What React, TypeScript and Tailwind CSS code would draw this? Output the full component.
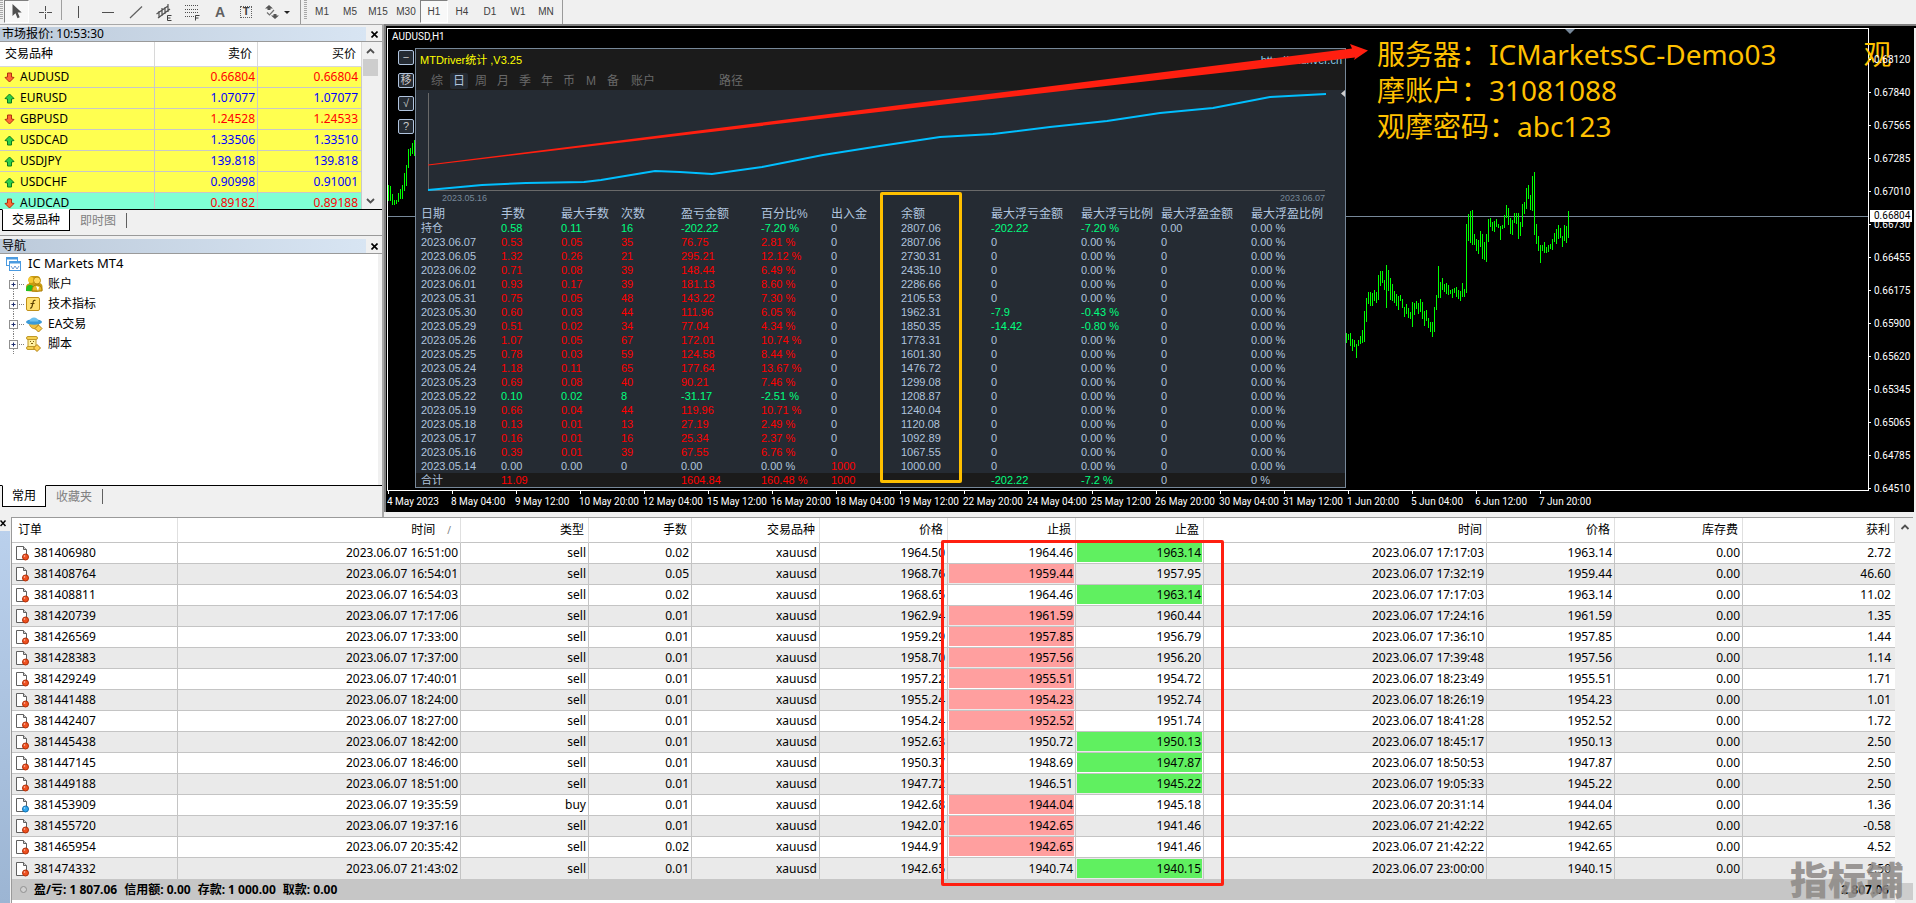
import React, { useState } from 'react';

interface Quote {
  symbol: string;
  bid: string;
  ask: string;
  up: boolean;
  cross?: boolean;
}

interface Order {
  id: string;
  openTime: string;
  type: 'sell' | 'buy';
  lots: string;
  open: string;
  sl: string;
  tp: string;
  closeTime: string;
  close: string;
  profit: string;
}

const PERIODS = ['M1', 'M5', 'M15', 'M30', 'H1', 'H4', 'D1', 'W1', 'MN'];

const QUOTES: Quote[] = [
  { symbol: 'AUDUSD', bid: '0.66804', ask: '0.66804', up: false },
  { symbol: 'EURUSD', bid: '1.07077', ask: '1.07077', up: true },
  { symbol: 'GBPUSD', bid: '1.24528', ask: '1.24533', up: false },
  { symbol: 'USDCAD', bid: '1.33506', ask: '1.33510', up: true },
  { symbol: 'USDJPY', bid: '139.818', ask: '139.818', up: true },
  { symbol: 'USDCHF', bid: '0.90998', ask: '0.91001', up: true },
  { symbol: 'AUDCAD', bid: '0.89182', ask: '0.89188', up: false, cross: true },
];

const STAT_HEAD = ['日期', '手数', '最大手数', '次数', '盈亏金额', '百分比%', '出入金', '余额', '最大浮亏金额', '最大浮亏比例', '最大浮盈金额', '最大浮盈比例'];

const STATS: string[][] = [
  ['持仓', '0.58', '0.11', '16', '-202.22', '-7.20 %', '0', '2807.06', '-202.22', '-7.20 %', '0.00', '0.00 %'],
  ['2023.06.07', '0.53', '0.05', '35', '76.75', '2.81 %', '0', '2807.06', '0', '0.00 %', '0', '0.00 %'],
  ['2023.06.05', '1.32', '0.26', '21', '295.21', '12.12 %', '0', '2730.31', '0', '0.00 %', '0', '0.00 %'],
  ['2023.06.02', '0.71', '0.08', '39', '148.44', '6.49 %', '0', '2435.10', '0', '0.00 %', '0', '0.00 %'],
  ['2023.06.01', '0.93', '0.17', '39', '181.13', '8.60 %', '0', '2286.66', '0', '0.00 %', '0', '0.00 %'],
  ['2023.05.31', '0.75', '0.05', '48', '143.22', '7.30 %', '0', '2105.53', '0', '0.00 %', '0', '0.00 %'],
  ['2023.05.30', '0.60', '0.03', '44', '111.96', '6.05 %', '0', '1962.31', '-7.9', '-0.43 %', '0', '0.00 %'],
  ['2023.05.29', '0.51', '0.02', '34', '77.04', '4.34 %', '0', '1850.35', '-14.42', '-0.80 %', '0', '0.00 %'],
  ['2023.05.26', '1.07', '0.05', '67', '172.01', '10.74 %', '0', '1773.31', '0', '0.00 %', '0', '0.00 %'],
  ['2023.05.25', '0.78', '0.03', '59', '124.58', '8.44 %', '0', '1601.30', '0', '0.00 %', '0', '0.00 %'],
  ['2023.05.24', '1.18', '0.11', '65', '177.64', '13.67 %', '0', '1476.72', '0', '0.00 %', '0', '0.00 %'],
  ['2023.05.23', '0.69', '0.08', '40', '90.21', '7.46 %', '0', '1299.08', '0', '0.00 %', '0', '0.00 %'],
  ['2023.05.22', '0.10', '0.02', '8', '-31.17', '-2.51 %', '0', '1208.87', '0', '0.00 %', '0', '0.00 %'],
  ['2023.05.19', '0.66', '0.04', '44', '119.96', '10.71 %', '0', '1240.04', '0', '0.00 %', '0', '0.00 %'],
  ['2023.05.18', '0.13', '0.01', '13', '27.19', '2.49 %', '0', '1120.08', '0', '0.00 %', '0', '0.00 %'],
  ['2023.05.17', '0.16', '0.01', '16', '25.34', '2.37 %', '0', '1092.89', '0', '0.00 %', '0', '0.00 %'],
  ['2023.05.16', '0.39', '0.01', '39', '67.55', '6.76 %', '0', '1067.55', '0', '0.00 %', '0', '0.00 %'],
  ['2023.05.14', '0.00', '0.00', '0', '0.00', '0.00 %', '1000', '1000.00', '0', '0.00 %', '0', '0.00 %'],
  ['合计', '11.09', '', '', '1604.84', '160.48 %', '1000', '', '-202.22', '-7.2 %', '0', '0 %'],
];

const TIMES = [
  '4 May 2023', '8 May 04:00', '9 May 12:00', '10 May 20:00', '12 May 04:00', '15 May 12:00', '16 May 20:00',
  '18 May 04:00', '19 May 12:00', '22 May 20:00', '24 May 04:00', '25 May 12:00', '26 May 20:00', '30 May 04:00',
  '31 May 12:00', '1 Jun 20:00', '5 Jun 04:00', '6 Jun 12:00', '7 Jun 20:00',
];

const PRICES = ['0.68120', '0.67840', '0.67565', '0.67285', '0.67010', '0.66730', '0.66455', '0.66175', '0.65900', '0.65620', '0.65345', '0.65065', '0.64785', '0.64510'];

// [top, bottom] of every bar, two pixels apart
const BARS_LEFT = [
  [185, 201], [186, 201], [194, 205], [200, 205], [200, 204], [193, 202], [189, 199],
  [185, 199], [173, 191], [165, 186], [149, 168], [148, 156], [143, 154], [140, 156],
];

const BARS_RIGHT = [
  [333, 343], [334, 340], [333, 346], [339, 351], [340, 347], [344, 358], [340, 346], [336, 344], [330, 343], [311, 342],
  [298, 322], [292, 304], [292, 306], [293, 306], [290, 301], [292, 303], [275, 300], [271, 286], [271, 283], [280, 290],
  [265, 308], [270, 291], [278, 300], [284, 301], [291, 303], [294, 306], [296, 310], [295, 301], [299, 308], [307, 317],
  [304, 314], [308, 318], [312, 319], [302, 327], [303, 315], [301, 309], [303, 314], [299, 312], [302, 319], [311, 326],
  [310, 321], [318, 328], [322, 332], [322, 337], [307, 332], [295, 310], [266, 298], [282, 298], [278, 290], [284, 292],
  [283, 294], [285, 295], [290, 294], [289, 298], [288, 293], [287, 297], [290, 299], [291, 301], [283, 297], [289, 297],
  [224, 293], [214, 241], [211, 243], [210, 245], [234, 245], [239, 251], [240, 254], [231, 247], [234, 259], [242, 260],
  [234, 262], [219, 242], [218, 227], [222, 231], [221, 232], [219, 227], [224, 228], [226, 240], [225, 229], [215, 228],
  [205, 218], [208, 225], [218, 234], [220, 235], [213, 223], [213, 224], [213, 239], [222, 236], [204, 227], [202, 214],
  [188, 209], [185, 199], [195, 210], [176, 211], [172, 235], [224, 244], [236, 251], [245, 263], [245, 251], [242, 253],
  [247, 253], [245, 252], [244, 249], [239, 250], [233, 242], [229, 244], [225, 239], [228, 238], [236, 247], [225, 241],
  [226, 243], [211, 238],
];

const ORDERS: Order[] = [
  { id: '381406980', openTime: '16:51:00', type: 'sell', lots: '0.02', open: '1964.50', sl: '1964.46', tp: '1963.14', closeTime: '17:17:03', close: '1963.14', profit: '2.72' },
  { id: '381408764', openTime: '16:54:01', type: 'sell', lots: '0.05', open: '1968.76', sl: '1959.44', tp: '1957.95', closeTime: '17:32:19', close: '1959.44', profit: '46.60' },
  { id: '381408811', openTime: '16:54:03', type: 'sell', lots: '0.02', open: '1968.65', sl: '1964.46', tp: '1963.14', closeTime: '17:17:03', close: '1963.14', profit: '11.02' },
  { id: '381420739', openTime: '17:17:06', type: 'sell', lots: '0.01', open: '1962.94', sl: '1961.59', tp: '1960.44', closeTime: '17:24:16', close: '1961.59', profit: '1.35' },
  { id: '381426569', openTime: '17:33:00', type: 'sell', lots: '0.01', open: '1959.29', sl: '1957.85', tp: '1956.79', closeTime: '17:36:10', close: '1957.85', profit: '1.44' },
  { id: '381428383', openTime: '17:37:00', type: 'sell', lots: '0.01', open: '1958.70', sl: '1957.56', tp: '1956.20', closeTime: '17:39:48', close: '1957.56', profit: '1.14' },
  { id: '381429249', openTime: '17:40:01', type: 'sell', lots: '0.01', open: '1957.22', sl: '1955.51', tp: '1954.72', closeTime: '18:23:49', close: '1955.51', profit: '1.71' },
  { id: '381441488', openTime: '18:24:00', type: 'sell', lots: '0.01', open: '1955.24', sl: '1954.23', tp: '1952.74', closeTime: '18:26:19', close: '1954.23', profit: '1.01' },
  { id: '381442407', openTime: '18:27:00', type: 'sell', lots: '0.01', open: '1954.24', sl: '1952.52', tp: '1951.74', closeTime: '18:41:28', close: '1952.52', profit: '1.72' },
  { id: '381445438', openTime: '18:42:00', type: 'sell', lots: '0.01', open: '1952.63', sl: '1950.72', tp: '1950.13', closeTime: '18:45:17', close: '1950.13', profit: '2.50' },
  { id: '381447145', openTime: '18:46:00', type: 'sell', lots: '0.01', open: '1950.37', sl: '1948.69', tp: '1947.87', closeTime: '18:50:53', close: '1947.87', profit: '2.50' },
  { id: '381449188', openTime: '18:51:00', type: 'sell', lots: '0.01', open: '1947.72', sl: '1946.51', tp: '1945.22', closeTime: '19:05:33', close: '1945.22', profit: '2.50' },
  { id: '381453909', openTime: '19:35:59', type: 'buy', lots: '0.01', open: '1942.68', sl: '1944.04', tp: '1945.18', closeTime: '20:31:14', close: '1944.04', profit: '1.36' },
  { id: '381455720', openTime: '19:37:16', type: 'sell', lots: '0.01', open: '1942.07', sl: '1942.65', tp: '1941.46', closeTime: '21:42:22', close: '1942.65', profit: '-0.58' },
  { id: '381465954', openTime: '20:35:42', type: 'sell', lots: '0.02', open: '1944.91', sl: '1942.65', tp: '1941.46', closeTime: '21:42:22', close: '1942.65', profit: '4.52' },
  { id: '381474332', openTime: '21:43:02', type: 'sell', lots: '0.01', open: '1942.65', sl: '1940.74', tp: '1940.15', closeTime: '23:00:00', close: '1940.15', profit: '2.50' },
];

const ToolButton: React.FC<{ label: string; className: string; active?: boolean; children: React.ReactNode }> = ({ label, className, active, children }) => (
  <button
    aria-label={label}
    className={`flex h-[23px] items-center justify-center ${className} ${active ? 'border border-t-[#808080] border-l-[#808080] border-r-white border-b-white bg-[#f8f8f8]' : ''}`}
  >
    {children}
  </button>
);

const Grip = () => (
  <svg width="4" height="20" viewBox="0 0 4 20" className="shrink-0">
    {[0, 2, 4, 6, 8, 10, 12, 14, 16, 18].map(y => <path key={y} d={`M0 ${y + 0.5}h3`} stroke="#a8a8a8" />)}
  </svg>
);

const Toolbar = () => {
  const [period, setPeriod] = useState('H1');
  return (
    <header className="flex h-6 items-start bg-[#f0f0f0] font-['Liberation_Sans',sans-serif] text-[10px] text-[#404040]">
      <div className="flex h-6 w-[301px] items-start border-r border-[#9a9a9a]">
        <Grip />
        <ToolButton label="Cursor" className="w-[25px]" active>
          <svg width="10" height="15" viewBox="0 0 10 15"><path d="M0.500 0v12l3-2.800 2 5 2.200-1-2-4.800h4z" fill="#505050" /></svg>
        </ToolButton>
        <ToolButton label="Crosshair" className="w-8">
          <svg width="16" height="16" viewBox="0 0 16 16"><path d="M8.500 2v5M8.500 10v5M2 8.500h5M10 8.500h5M8 8.500h1" stroke="#505050" fill="none" /></svg>
        </ToolButton>
        <span className="h-5 w-px bg-[#a0a0a0]" />
        <ToolButton label="Vertical line" className="w-8">
          <svg width="16" height="16" viewBox="0 0 16 16"><path d="M8.500 2v12" stroke="#505050" /></svg>
        </ToolButton>
        <ToolButton label="Horizontal line" className="w-7">
          <svg width="16" height="16" viewBox="0 0 16 16"><path d="M2 8.500h12" stroke="#505050" /></svg>
        </ToolButton>
        <ToolButton label="Trend line" className="w-7">
          <svg width="16" height="16" viewBox="0 0 16 16"><path d="M2 14L14 2.500" stroke="#606060" strokeWidth="1.200" /></svg>
        </ToolButton>
        <ToolButton label="Equidistant channel" className="w-7">
          <svg width="16" height="18" viewBox="0 0 16 18">
            <path d="M0.500 11L12 3M2 15L14 6M3 8v7M6 5v8M9 4v7M12 1v8" stroke="#505050" strokeWidth="1.200" fill="none" />
            <path d="M15.500 12.500h-4v5h4M11.500 15h3" stroke="#404040" fill="none" />
          </svg>
        </ToolButton>
        <ToolButton label="Fibonacci" className="w-7">
          <svg width="16" height="18" viewBox="0 0 16 18">
            <path d="M1 2.500h13M1 6.500h13M1 9.500h13M1 13.500h9" stroke="#505050" strokeDasharray="1 1" fill="none" />
            <path d="M15.500 12.500h-4v5M11.500 15h3" stroke="#404040" fill="none" />
          </svg>
        </ToolButton>
        <ToolButton label="Text" className="w-7 text-sm font-bold text-[#606060]">A</ToolButton>
        <ToolButton label="Text label" className="w-6">
          <span className="flex h-3 w-3 items-center justify-center border border-dotted border-[#606060] text-[11px] leading-none font-bold">T</span>
        </ToolButton>
        <ToolButton label="Arrows" className="ml-1 w-8">
          <svg width="26" height="16" viewBox="0 0 26 16">
            <path d="M4 1l4 3.500H5.500V6h-3V4.500H0zM10 15L6 11.500h2.500V10h3v1.500H14z" fill="#555" />
            <path d="M2 8.500l2.500 2.500 4.500-5" stroke="#707070" strokeWidth="1.200" fill="none" />
            <path d="M19 7h6l-3 3z" fill="#222" />
          </svg>
        </ToolButton>
      </div>
      <div className="flex h-6 w-[262px] items-start border-r border-[#9a9a9a] pl-[3px]">
        <Grip />
        {PERIODS.map(p => (
          <button
            key={p}
            onClick={() => setPeriod(p)}
            className={`h-[23px] w-7 border leading-[22px] ${p === period ? 'border-t-[#808080] border-l-[#808080] border-r-white border-b-white bg-[#f8f8f8]' : 'border-transparent'}`}
          >
            {p}
          </button>
        ))}
      </div>
    </header>
  );
};

const PaneTitle: React.FC<{ title: string }> = ({ title }) => (
  <div className="flex h-[15px] items-center border-b border-[#9a9a9a] bg-[#f0f0f0]">
    <h2 className="h-[14px] flex-1 bg-linear-to-r from-[#bccada] to-[#d8e5f3] pl-[2px] text-xs leading-[14px]">{title}</h2>
    <button aria-label={`Close ${title}`} className="flex h-[14px] w-4 items-center justify-center">
      <svg width="7" height="7" viewBox="0 0 7 7"><path d="M0.500 0.500l6 6M6.500 0.500l-6 6" stroke="#000" strokeWidth="1.600" /></svg>
    </button>
  </div>
);

const PaneTabs: React.FC<{ tabs: string[]; wide?: boolean }> = ({ tabs, wide }) => (
  <div className="flex h-[22px] border-t border-black bg-[#f0f0f0] pl-[2px] text-xs">
    <button className={`-mt-px border border-t-white border-black bg-white ${wide ? 'w-[68px]' : 'w-[44px]'}`}>{tabs[0]}</button>
    <button className="my-[3px] border-r border-[#606060] px-[10px] leading-4 text-[#808080]">{tabs[1]}</button>
  </div>
);

const QuoteArrow: React.FC<{ up: boolean }> = ({ up }) => (
  <svg width="11" height="11" viewBox="0 0 11 11" className="shrink-0">
    {up
      ? <path d="M5.500 1L10 5.500 7.500 6v4h-4V6L1 5.500z" fill="#2fd04a" stroke="#0a7a20" />
      : <path d="M5.500 10L1 5.500 3.500 5V1h4v4l2.500.500z" fill="#ff6a35" stroke="#b03010" />}
  </svg>
);

const MarketWatch = () => (
  <section className="border-b border-[#9a9a9a] pt-[2px] pb-1">
    <PaneTitle title="市场报价: 10:53:30" />
    <div className="flex h-[167px] bg-[#f0f0f0] pr-1">
      <div className="flex-1 overflow-hidden">
        <table className="w-full table-fixed border-separate border-spacing-0 text-xs">
          <colgroup><col className="w-[155px]" /><col className="w-[103px]" /><col /></colgroup>
          <thead>
            <tr className="h-[25px] bg-white">
              {['交易品种', '卖价', '买价'].map((h, i) => (
                <th key={h} className={`border-r border-b border-[#d8d8d8] px-[5px] py-0 font-normal ${i === 0 ? 'text-left' : 'text-right'}`}>{h}</th>
              ))}
            </tr>
          </thead>
          <tbody>
            {QUOTES.map(q => (
              <tr key={q.symbol} className={`h-[21px] ${q.cross ? 'bg-[#7fffd4]' : 'bg-[#ffff50]'} ${q.up ? 'text-[#0000ff]' : 'text-[#ff0000]'}`}>
                <td className="border-r border-b border-[#c8c8c8] p-0 pl-1 text-black">
                  <span className="flex h-5 items-center gap-[5px]"><QuoteArrow up={q.up} />{q.symbol}</span>
                </td>
                <td className="border-r border-b border-[#c8c8c8] p-0 pr-[2px] text-right">{q.bid}</td>
                <td className="border-r border-b border-[#c8c8c8] p-0 pr-[3px] text-right">{q.ask}</td>
              </tr>
            ))}
          </tbody>
        </table>
      </div>
      <div className="flex w-4 flex-col items-center justify-between">
        <div className="flex w-full flex-col items-center">
          <svg width="9" height="17" viewBox="0 0 9 17"><path d="M1 11l3.500-3.500L8 11" stroke="#505050" strokeWidth="1.800" fill="none" /></svg>
          <div className="h-[17px] w-[15px] bg-[#cdcdcd]" />
        </div>
        <svg width="9" height="17" viewBox="0 0 9 17"><path d="M1 7l3.500 3.500L8 7" stroke="#505050" strokeWidth="1.800" fill="none" /></svg>
      </div>
    </div>
    <PaneTabs tabs={['交易品种', '即时图']} wide />
  </section>
);

const TREE = [
  {
    label: '账户',
    icon: (
      <>
        <path d="M1 16v-4c0-2 1-3 3-3.500V4c0-2 1-3 3-3h5c2 0 3 1 3 3v4c2 1 2.500 2 2.500 4v3.500L12 17z" fill="#c89a10" />
        <circle cx="6" cy="5" r="3" fill="#f7c830" /><circle cx="12" cy="5.500" r="3.500" fill="#ffd85a" stroke="#b88a10" />
        <path d="M1 16c0-4 1-6 4-6s4 2 4 6z" fill="#20c020" /><path d="M7 16c0-4 2-6 5-6s5 2 5 6z" fill="#e8b820" stroke="#a87a08" /><path d="M11 11l2 5 1-4z" fill="#fff" />
      </>
    ),
  },
  {
    label: '技术指标',
    icon: (
      <>
        <rect x="1.500" y="2.500" width="13" height="13" rx="1.500" fill="#ffe070" stroke="#c09018" />
        <path d="M10.500 5.500c-2-.6-2.200.6-2.500 2l-1 4c-.3 1.200-.8 1.800-2 1.500M5.500 8.500h4" stroke="#5a4000" strokeWidth="1.200" fill="none" />
      </>
    ),
  },
  {
    label: 'EA交易',
    icon: (
      <>
        <path d="M4 8c1 5 4 6 8 6l2-6z" fill="#f0c040" stroke="#b08010" strokeWidth=".7" />
        <ellipse cx="9" cy="7" rx="8" ry="2.800" fill="#3a9ad8" /><path d="M4.500 6.500C5 1 13 1 13.500 6.500z" fill="#6cc0ee" />
        <path d="M13.500 10l3.500 3.500-3.500 3.500-3.500-3.500z" fill="#ffd050" stroke="#b08010" />
      </>
    ),
  },
  {
    label: '脚本',
    icon: (
      <>
        <path d="M3 4h8v9H3z" fill="#fff0a0" stroke="#c09828" />
        <rect x="1.500" y="1.500" width="11" height="3" rx="1.500" fill="#f5d050" stroke="#c09828" /><rect x="1.500" y="11.500" width="9" height="3" rx="1.500" fill="#f5d050" stroke="#c09828" />
        <path d="M5 6.500h1M8 6.500h1M6 8.500h2" stroke="#806010" />
        <path d="M12 9.500l3.500 3.500-3.500 3.500L8.500 13z" fill="#ffd050" stroke="#b08010" />
      </>
    ),
  },
];

const Navigator = () => (
  <section className="flex flex-1 flex-col pt-[3px] pb-[10px]">
    <PaneTitle title="导航" />
    <div className="mr-1 flex-1 bg-white text-xs">
      <div className="flex h-5 items-center gap-[7px] pl-[6px] text-[13px]">
        <svg width="15" height="14" viewBox="0 0 15 14">
          <rect x=".5" y=".5" width="11" height="8" fill="#fff" stroke="#4a9ae0" /><path d="M0 1.500h12" stroke="#4a9ae0" strokeWidth="2" />
          <rect x="3.500" y="4.500" width="11" height="9" fill="#fff" stroke="#4a9ae0" /><path d="M3 5.500h12" stroke="#4a9ae0" strokeWidth="2" />
          <path d="M5 9l2 3 2-3 2 3 2-3" stroke="#4a80c8" strokeWidth=".8" fill="none" />
        </svg>
        IC Markets MT4
      </div>
      <ul>
        {TREE.map(n => (
          <li key={n.label} className="flex h-5 items-center pl-[9px]">
            <svg width="16" height="20" viewBox="0 0 16 20">
              <path d="M4.500 0v6M4.500 15v5M10 10.500h6" stroke="#808080" strokeDasharray="1 1" fill="none" />
              <rect x=".5" y="6.500" width="8" height="8" fill="#fff" stroke="#909090" /><path d="M2.500 10.500h4M4.500 8.500v4" stroke="#203070" />
            </svg>
            <svg width="18" height="18" viewBox="0 0 18 18" className="mr-[5px]">{n.icon}</svg>
            {n.label}
          </li>
        ))}
      </ul>
    </div>
    <PaneTabs tabs={['常用', '收藏夹']} />
  </section>
);

const statColor = (row: string[], col: number) => {
  const v = row[col];
  if (col >= 8) return v.startsWith('-') ? 'text-[#00ff7f]' : '';
  if (col === 6) return v === '1000' ? 'text-[#ff0000]' : '';
  if (col === 0 || col === 7 || row[4] === '0.00') return '';
  return row[4].startsWith('-') ? 'text-[#00ff7f]' : 'text-[#ff0000]';
};

const StatsPanel = () => (
  <section className="absolute top-[19px] left-[27px] w-[931px] border border-[#778899] bg-[#252b33] font-['Liberation_Sans','Noto_Sans_CJK_SC',sans-serif] text-[#b0c4de]">
    <div className="h-[41px] bg-[#1b1b1b]">
      <div className="flex h-6 items-start justify-between pr-[3px] pl-1 text-[11px] leading-[22px]">
        <h3 className="text-[#ffff00]">MTDriver统计 ,V3.25</h3>
        <a href="#mtdriver" className="text-[#87ceeb]">http://mtdriver.cn</a>
      </div>
      <nav className="flex h-4 items-center pl-3 text-xs leading-4 text-[#696969]">
        {['综', '日', '周', '月', '季', '年', '币', 'M', '备'].map(t => (
          <button key={t} className={`mr-1 h-4 w-[18px] rounded-xs ${t === '日' ? 'bg-[#252b33] text-[#b0c4de]' : ''}`}>{t}</button>
        ))}
        <button className="ml-[5px]">账户</button>
        <button className="ml-16">路径</button>
      </nav>
    </div>
    <svg viewBox="416 90 929 101" className="block w-full">
      <path d="M428.500 93v97.500H1325" stroke="#696969" fill="none" />
      <polyline
        points="428,190 482,185 526,183 584,182 601,180 655,171 680,172 712,174 762,167 823,155 880,146 940,137 993,134 1050,127 1107,121 1160,113 1213,108 1270,97 1326,94"
        fill="none" stroke="#00bfff" strokeWidth="2"
      />
      <path d="M1345 90v7l-4-3.500z" fill="#d0d0d0" />
    </svg>
    <div className="flex h-4 justify-between pr-[20px] pl-[26px] text-[9px] leading-[14px] text-[#778899]">
      <span>2023.05.16</span>
      <span>2023.06.07</span>
    </div>
    <table className="w-full table-fixed border-collapse text-[11px] leading-[14px]">
      <colgroup>
        <col className="w-[85px]" /><col className="w-[60px]" /><col className="w-[60px]" /><col className="w-[60px]" />
        <col className="w-[80px]" /><col className="w-[70px]" /><col className="w-[70px]" /><col className="w-[90px]" />
        <col className="w-[90px]" /><col className="w-[80px]" /><col className="w-[90px]" /><col />
      </colgroup>
      <thead>
        <tr>
          {STAT_HEAD.map((h, i) => (
            <th key={h} className={`h-[14px] p-0 text-left text-xs leading-[14px] font-normal whitespace-nowrap ${i === 0 ? 'pl-[5px]' : ''}`}>{h}</th>
          ))}
        </tr>
      </thead>
      <tbody>
        {STATS.map(row => (
          <tr key={row[0]} className={row[0] === '合计' ? 'bg-[#1b1b1b]' : ''}>
            {row.map((v, i) => (
              <td key={i} className={`h-[14px] p-0 whitespace-nowrap ${i === 0 ? 'pl-[5px]' : ''} ${statColor(row, i)}`}>{v}</td>
            ))}
          </tr>
        ))}
      </tbody>
    </table>
  </section>
);

const Chart = () => (
  <main className="mb-[5px] flex min-w-0 flex-1 flex-col border-t-2 border-l-2 border-[#808080] bg-black pt-[2px] pl-px font-['Roboto','Noto_Sans_CJK_SC',sans-serif] text-[10px] text-white">
    <div className="flex flex-1">
      <div className="relative flex-1 border border-white">
        <svg className="absolute inset-0 h-full w-full">
          <g transform="translate(-388 -29)">
            <path d="M388 216.500H1869" stroke="#778899" />
            <path d="M1565 29h10l-5 5z" fill="#778899" />
            {BARS_LEFT.map(([a, b], i) => <path key={i} d={`M${388.5 + i * 2} ${a}V${b}`} stroke="#00ff00" />)}
            {BARS_RIGHT.map(([a, b], i) => <path key={i} d={`M${1346.5 + i * 2} ${a}V${b}`} stroke="#00ff00" />)}
          </g>
        </svg>
        <p className="relative pl-1 leading-4">AUDUSD,H1</p>
        <div className="absolute top-[21px] left-[10px] flex flex-col gap-2 font-['Liberation_Sans','Noto_Sans_CJK_SC',sans-serif] text-[11px] text-[#c8c8c8]">
          {['−', '移', '√', '?'].map(b => (
            <button key={b} className="flex h-[15px] w-4 items-center justify-center rounded-xs border border-[#b0c4de] bg-[#252b33] leading-none">{b}</button>
          ))}
        </div>
        <StatsPanel />
        <div className="absolute top-[163px] left-[492px] h-[291px] w-[82px] rounded-xs border-3 border-[#ffc000]" />
        <svg className="absolute inset-0 h-full w-full overflow-visible">
          <path transform="translate(-388 -29)" d="M428 164.500L900 105L1352 48.500L1350 44L1368 50.500L1354 60L1355 57.500L900 109.500L428 165.500z" fill="#ff1f10" />
        </svg>
        <div className="absolute top-[7px] left-[989px] font-['Noto_Sans','Noto_Sans_CJK_SC',sans-serif] text-[28px] leading-9 whitespace-nowrap text-[#ffc000]">
          <p className="flex gap-[87px]"><span>服务器：ICMarketsSC-Demo03</span><span>观</span></p>
          <p>摩账户：31081088</p>
          <p>观摩密码：abc123</p>
        </div>
      </div>
      <div className="relative w-[45px] pt-[15px]">
        <ul className="-mb-4">
          {PRICES.map(p => (
            <li key={p} className="flex h-[33px] items-center gap-[3px]"><span className="h-px w-[2px] bg-white" />{p}</li>
          ))}
        </ul>
        <span className="absolute top-[182px] left-px h-3 w-[42px] bg-white pl-1 leading-3 text-black">0.66804</span>
      </div>
      <div className="w-[2px] bg-[#f0f0f0]" />
    </div>
    <div className="flex">
      <ul className="flex h-[21px] flex-1 overflow-hidden leading-4 whitespace-nowrap">
        {TIMES.map(t => (
          <li key={t} className="w-16 shrink-0"><span className="ml-px block h-[3px] w-px bg-white" />{t}</li>
        ))}
      </ul>
      <div className="w-[2px] bg-[#f0f0f0]" />
    </div>
  </main>
);

const OrderIcon: React.FC<{ buy: boolean }> = ({ buy }) => (
  <svg width="15" height="16" viewBox="0 0 15 16" className="shrink-0">
    <path d="M1.500 1.500h7l3 3v10h-10z" fill="#fff" stroke="#606060" />
    <path d="M8.500 1.500v3h3" fill="#d0d0d0" stroke="#606060" />
    <circle cx="10.500" cy="12" r="3" fill={buy ? '#30a8f0' : '#f05020'} stroke={buy ? '#1070b0' : '#b03008'} />
    <circle cx="9.500" cy="11" r=".8" fill="#fff" opacity=".7" />
  </svg>
);

const ORDER_HEAD = ['订单', '时间', '类型', '手数', '交易品种', '价格', '止损', '止盈', '时间', '价格', '库存费', '获利'];

const Terminal = () => (
  <section className="relative flex bg-[#f0f0f0]">
    <div className="flex w-[11px] flex-col">
      <button aria-label="Close terminal" className="flex h-[14px] items-start pt-[3px]">
        <svg width="7" height="7" viewBox="0 0 7 7"><path d="M0.500 0.500l5 5.500M5.500 0.500l-5 5.500" stroke="#000" strokeWidth="1.500" /></svg>
      </button>
      <div className="mr-px flex-1 bg-linear-to-b from-[#bad0ec] to-[#9cb5d3]" />
    </div>
    <div className="flex-1 border-t border-l border-[#9a9a9a] bg-white pb-[3px]">
      <table className="w-full table-fixed border-separate border-spacing-0 text-xs">
        <colgroup>
          <col className="w-[166px]" /><col className="w-[283px]" /><col className="w-[128px]" /><col className="w-[103px]" />
          <col className="w-[128px]" /><col className="w-[128px]" /><col className="w-[128px]" /><col className="w-[128px]" />
          <col className="w-[283px]" /><col className="w-[128px]" /><col className="w-[128px]" /><col />
        </colgroup>
        <thead>
          <tr className="h-[25px]">
            {ORDER_HEAD.map((h, i) => (
              <th key={i} className={`border-r border-b border-r-[#e0e0e0] border-b-[#c4c4c4] p-0 font-normal ${i === 0 ? 'pl-[6px] text-left' : 'pr-1 text-right'}`}>
                {h}{i === 1 && <span className="mr-[5px] ml-3 text-[10px] text-[#808080]">/</span>}
              </th>
            ))}
          </tr>
        </thead>
        <tbody>
          {ORDERS.map((o, r) => {
            const last = r === ORDERS.length - 1;
            const cell = `border-r border-[#c4c4c4] p-0 pr-[2px] text-right ${last ? '' : 'border-b'}`;
            const mark = `border-r border-[#c4c4c4] p-0 ${last ? '' : 'border-b'}`;
            return (
              <tr key={o.id} className={`h-[21px] ${r % 2 ? 'bg-[#eaeaea]' : 'bg-white'}`}>
                <td className={`border-r border-[#c4c4c4] p-0 pl-[3px] ${last ? '' : 'border-b'}`}>
                  <span className="flex h-5 items-center gap-1"><OrderIcon buy={o.type === 'buy'} />{o.id}</span>
                </td>
                <td className={cell}>2023.06.07 {o.openTime}</td>
                <td className={cell}>{o.type}</td>
                <td className={cell}>{o.lots}</td>
                <td className={cell}>xauusd</td>
                <td className={cell}>{o.open}</td>
                <td className={mark}><div className={`mx-px mb-px h-[19px] pr-px text-right leading-[19px] ${o.sl === o.close ? 'bg-[#ff9f9f]' : ''}`}>{o.sl}</div></td>
                <td className={mark}><div className={`mx-px mb-px h-[19px] pr-px text-right leading-[19px] ${o.tp === o.close ? 'bg-[#60f060]' : ''}`}>{o.tp}</div></td>
                <td className={cell}>2023.06.07 {o.closeTime}</td>
                <td className={cell}>{o.close}</td>
                <td className={cell}>0.00</td>
                <td className={`border-[#c4c4c4] p-0 pr-1 text-right ${last ? '' : 'border-b'}`}>{o.profit}</td>
              </tr>
            );
          })}
        </tbody>
        <tfoot>
          <tr className="h-[21px] bg-[#c6c6c6] font-bold">
            <td colSpan={11} className="p-0 pl-2">
              <span className="flex items-center gap-[7px]">
                <span className="h-[7px] w-[7px] rounded-full border border-[#909090] bg-[#d0d0d0]" />
                <span>盈/亏: 1 807.06</span><span>信用额: 0.00</span><span>存款: 1 000.00</span><span>取款: 0.00</span>
              </span>
            </td>
            <td className="p-0 pr-[6px] text-right">2 807.06</td>
          </tr>
        </tfoot>
      </table>
    </div>
    <div className="mr-[3px] flex w-[18px] flex-col justify-between border-t border-[#9a9a9a] pl-[2px] pb-[3px]">
      <svg width="16" height="17" viewBox="0 0 16 17"><path d="M4.500 11L8 7.500l3.500 3.500" stroke="#505050" strokeWidth="1.800" fill="none" /></svg>
      <div className="h-[17px] bg-[#cdcdcd]" />
    </div>
    <div className="absolute top-[23px] left-[941px] h-[346px] w-[283px] rounded-xs border-3 border-[#ff1f10]" />
    <p className="absolute right-3 bottom-1 text-[38px] leading-10 font-black text-[#8f8b88]/90">指标铺</p>
  </section>
);

const App = () => (
  <div className="flex min-h-screen flex-col bg-[#f0f0f0] font-['Noto_Sans','Noto_Sans_CJK_SC',sans-serif] text-black">
    <Toolbar />
    <div className="flex flex-1">
      <aside className="flex w-96 flex-col border-t border-r-2 border-[#a8a8a8]">
        <MarketWatch />
        <Navigator />
      </aside>
      <Chart />
    </div>
    <Terminal />
  </div>
);

export default App;
